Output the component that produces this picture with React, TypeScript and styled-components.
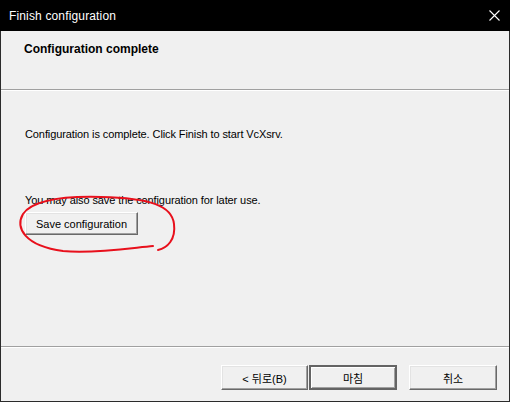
import React from "react";
import styled, { createGlobalStyle } from "styled-components";

const Global = createGlobalStyle`
  html, body { margin: 0; padding: 0; background: #000; }
  body { font-family: "Liberation Sans", "Noto Sans CJK KR", sans-serif; font-size: 11px; }
`;

const Window = styled.div`
  width: 510px;
  height: 402px;
  box-sizing: border-box;
  border: 1px solid #2b2b2b;
  border-top: none;
  background: #f0f0f0;
  display: flex;
  flex-direction: column;
  position: relative;
`;

const TitleBar = styled.div`
  height: 31px;
  background: #000;
  color: #fff;
  display: flex;
  align-items: center;
  justify-content: space-between;
  padding: 0 9px 0 9px;
  margin: 0 -1px;
  font-size: 12px;
  letter-spacing: 0.15px;
`;

const CloseIcon = styled.svg`
  width: 11px;
  height: 11px;
  margin-right: 1px;
`;

const Header = styled.div`
  height: 58px;
  box-sizing: border-box;
  padding: 11px 0 0 23px;
  font-weight: bold;
  font-size: 12px;
  color: #000;
`;

const Separator = styled.div`
  height: 1px;
  background: #a0a0a0;
  border-bottom: 1px solid #fff;
`;

const Body = styled.div`
  flex: 1;
  padding: 35px 0 0 24px;
  display: flex;
  flex-direction: column;
  align-items: flex-start;
  color: #000;
`;

const Text = styled.div<{ $gap?: number }>`
  line-height: 16px;
  font-size: 11px;
  letter-spacing: -0.1px;
  margin-top: ${(p) => p.$gap ?? 0}px;
`;

const Button = styled.button<{ $w: number; $default?: boolean }>`
  width: ${(p) => p.$w}px;
  height: 25px;
  box-sizing: border-box;
  background: #f0f0f0;
  font-family: "Liberation Sans", "Noto Sans CJK KR", sans-serif;
  font-size: 11px;
  color: #000;
  padding: 0;
  border: 1px solid;
  border-color: #fff #696969 #696969 #fff;
  box-shadow: inset -1px -1px 0 #a0a0a0, inset 1px 1px 0 #e3e3e3;
  ${(p) =>
    p.$default
      ? `border: 2px solid #646464; box-shadow: inset 1px 1px 0 #fff, inset -1px -1px 0 #a0a0a0;`
      : ""}
`;

const SaveButton = styled(Button)`
  margin-top: 4px;
  height: 23px;
`;

const Footer = styled.div`
  height: 53px;
  box-sizing: border-box;
  display: flex;
  justify-content: flex-end;
  align-items: flex-start;
  padding: 17px 12px 0 0;
`;

const Pair = styled.div`
  display: flex;
  gap: 1px;
  margin-right: 12px;
`;

const Annotation = styled.svg`
  position: absolute;
  left: 0;
  top: 0;
  width: 510px;
  height: 402px;
  pointer-events: none;
`;

export default function App() {
  return (
    <>
      <Global />
      <Window>
        <TitleBar>
          <span>Finish configuration</span>
          <CloseIcon viewBox="0 0 11 11">
            <path d="M0.5 0.5 L10.5 10.5 M10.5 0.5 L0.5 10.5" stroke="#fff" strokeWidth="1.1" />
          </CloseIcon>
        </TitleBar>
        <Header>Configuration complete</Header>
        <Separator />
        <Body>
          <Text>Configuration is complete. Click Finish to start VcXsrv.</Text>
          <Text $gap={50}>You may also save the configuration for later use.</Text>
          <SaveButton $w={113}>Save configuration</SaveButton>
        </Body>
        <Separator />
        <Footer>
          <Pair>
            <Button $w={87}>&lt; 뒤로(B)</Button>
            <Button $w={88} $default>
              마침
            </Button>
          </Pair>
          <Button $w={88}>취소</Button>
        </Footer>
        <Annotation viewBox="0 0 510 402">
          <path
            d="M157 250 C 166 248, 175 240, 173 224 C 171 206, 150 198, 100 197 C 62 196, 32 200, 22 214 C 14 228, 24 246, 62 251 C 92 254, 130 248, 152 246"
            fill="none"
            stroke="#e8101c"
            strokeWidth="2"
            strokeLinecap="round"
          />
        </Annotation>
      </Window>
    </>
  );
}
